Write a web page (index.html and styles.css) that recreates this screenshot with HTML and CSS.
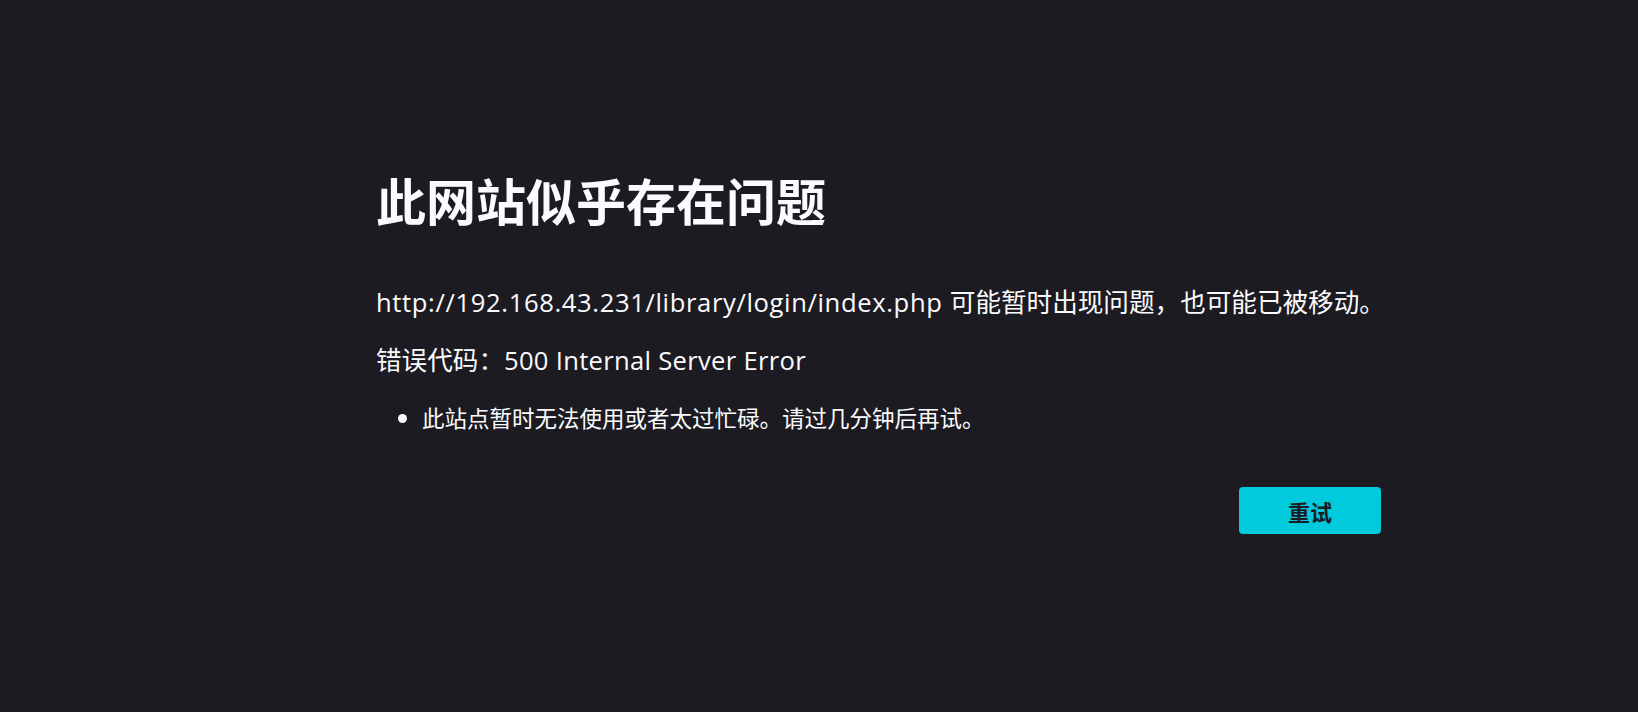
FILE: index.html
```html
<!DOCTYPE html>
<html lang="zh-CN">
<head>
<meta charset="utf-8">
<title>问题加载页面</title>
<link rel="stylesheet" href="styles.css">
</head>
<body>
  <main class="container">
    <h1 class="title">此网站似乎存在问题</h1>
    <p class="desc"><span class="url">http://192.168.43.231/library/login/index.php </span>可能暂时出现问题，也可能已被移动。</p>
    <p class="code">错误代码：<span class="latin">500 Internal Server Error</span></p>
    <ul class="tips">
      <li>此站点暂时无法使用或者太过忙碌。请过几分钟后再试。</li>
    </ul>
    <div class="actions">
      <button class="retry">重试</button>
    </div>
  </main>
</body>
</html>
```

FILE: styles.css
```css
html, body {
  margin: 0;
  padding: 0;
  background: #1c1b22;
  height: 100%;
}
body {
  color: #fbfbfe;
  font-family: "Open Sans", "Noto Sans CJK SC", sans-serif;
  padding-top: 169px;
  box-sizing: border-box;
}
.container {
  margin-left: 376px;
  width: 1005px;
}
.title {
  margin: 0;
  font-family: "Noto Sans CJK SC", sans-serif;
  font-size: 50px;
  line-height: 60px;
  font-weight: 700;
}
.desc, .code {
  margin: 0;
  font-size: 25.6px;
  line-height: 36px;
  white-space: nowrap;
}
.desc { margin-top: 56px; }
.code { margin-top: 22px; }
.url { letter-spacing: 0.63px; }
.latin { letter-spacing: 0.3px; }
.tips {
  margin: 22px 0 0 0;
  padding-left: 46px;
  font-family: "Noto Sans CJK SC", sans-serif;
  font-size: 22.5px;
  line-height: 32px;
}
.actions {
  display: flex;
  justify-content: flex-end;
  margin-top: 54px;
}
.retry {
  width: 142px;
  height: 47px;
  border: none;
  border-radius: 4px;
  background: #00cadb;
  color: #1c1b22;
  font-family: "Noto Sans CJK SC", sans-serif;
  font-size: 22px;
  font-weight: 700;
}
```
